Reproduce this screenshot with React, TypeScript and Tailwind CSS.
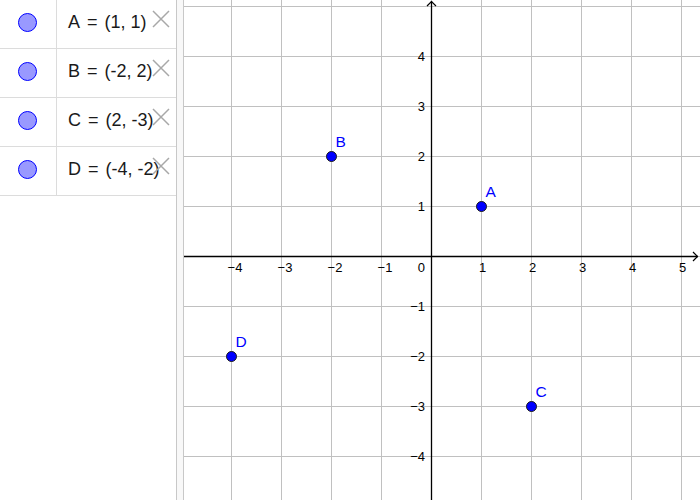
import React from 'react';

const rows = [
  { name: 'A', value: '(1, 1)' },
  { name: 'B', value: '(-2, 2)' },
  { name: 'C', value: '(2, -3)' },
  { name: 'D', value: '(-4, -2)' },
];

const points = [
  { name: 'A', x: 1, y: 1 },
  { name: 'B', x: -2, y: 2 },
  { name: 'C', x: 2, y: -3 },
  { name: 'D', x: -4, y: -2 },
];

// graphics view geometry (svg-local px)
const W = 516;
const H = 500;
const OX = 247;
const OY = 256;
const U = 50;

function Graphics() {
  const xs = [-4, -3, -2, -1, 0, 1, 2, 3, 4, 5];
  const ys = [-5, -4, -3, -2, -1, 0, 1, 2, 3, 4, 5];
  return (
    <svg width={W} height={H} className="block" style={{ fontFamily: '"Liberation Sans", Arial, sans-serif' }}>
      <rect width={W} height={H} fill="#ffffff" />
      {xs.map((k) => (
        <line key={'gx' + k} x1={OX + k * U + 0.5} y1={0} x2={OX + k * U + 0.5} y2={H} stroke="#c0c0c0" strokeWidth={1} />
      ))}
      {ys.map((k) => (
        <line key={'gy' + k} x1={0} y1={OY - k * U + 0.5} x2={W} y2={OY - k * U + 0.5} stroke="#c0c0c0" strokeWidth={1} />
      ))}

      {/* axes */}
      <line x1={0} y1={OY + 0.5} x2={W - 2} y2={OY + 0.5} stroke="#000" strokeWidth={1.3} />
      <line x1={OX + 0.5} y1={1} x2={OX + 0.5} y2={H} stroke="#000" strokeWidth={1.3} />
      <polyline points={`${W - 7},${OY - 4} ${W - 2.5},${OY + 0.5} ${W - 7},${OY + 5}`} fill="none" stroke="#000" strokeWidth={1.2} />
      <polyline points={`${OX - 4},6 ${OX + 0.5},1.5 ${OX + 5},6`} fill="none" stroke="#000" strokeWidth={1.2} />

      {/* x labels */}
      {[-4, -3, -2, -1, 1, 2, 3, 4, 5].map((k) => (
        <text key={'lx' + k} x={OX + k * U + (k < 0 ? 4 : 1.5)} y={272} fontSize={13} textAnchor="middle" fill="#000">
          {k < 0 ? '\u2212' + -k : k}
        </text>
      ))}
      <text x={OX - 6} y={272} fontSize={13} textAnchor="end" fill="#000">0</text>

      {/* y labels */}
      {[-4, -3, -2, -1, 1, 2, 3, 4].map((k) => (
        <text key={'ly' + k} x={OX - 6} y={OY - k * U + 5} fontSize={13} textAnchor="end" fill="#000">
          {k < 0 ? '\u2212' + -k : k}
        </text>
      ))}

      {/* points */}
      {points.map((p) => {
        const cx = OX + p.x * U + 0.5;
        const cy = OY - p.y * U + 0.5;
        return (
          <g key={p.name}>
            <circle cx={cx} cy={cy} r={5} fill="#0000ff" stroke="#1a1a1a" strokeWidth={1} />
            <text x={cx + 4} y={cy - 10} fontSize={15.5} fill="#0000ff">{p.name}</text>
          </g>
        );
      })}
    </svg>
  );
}

function CloseX() {
  return (
    <svg width="20" height="20" viewBox="0 0 20 20" className="absolute left-[151px] top-[9px]">
      <path d="M2 2 L18 18 M18 2 L2 18" stroke="#a8a8a8" strokeWidth={1.5} fill="none" />
    </svg>
  );
}

export default function App() {
  return (
    <div className="flex w-[700px] h-[500px] overflow-hidden bg-white">
      <div className="w-[176px] shrink-0 flex flex-col" style={{ fontFamily: '"Liberation Sans", Arial, sans-serif' }}>
        {rows.map((r) => (
          <div key={r.name} className="relative flex h-[49px] border-b border-[#dcdcdc]">
            <div className="w-[57px] shrink-0 flex items-center justify-center border-r border-[#dcdcdc] pr-[1px] pb-[4px]">
              <div className="w-[19px] h-[19px] rounded-full bg-[#9999ff] border border-[#0000ff]" />
            </div>
            <div className="flex items-center pl-[11px] pb-[3px] text-[18px] text-[#1a1a1a] whitespace-nowrap">
              {r.name}
              <span className="px-[7px]">=</span>
              {r.value}
            </div>
            <CloseX />
          </div>
        ))}
      </div>
      <div className="w-[8px] shrink-0 bg-[#f8f8f8] border-x border-[#c8c8c8]" />
      <Graphics />
    </div>
  );
}
